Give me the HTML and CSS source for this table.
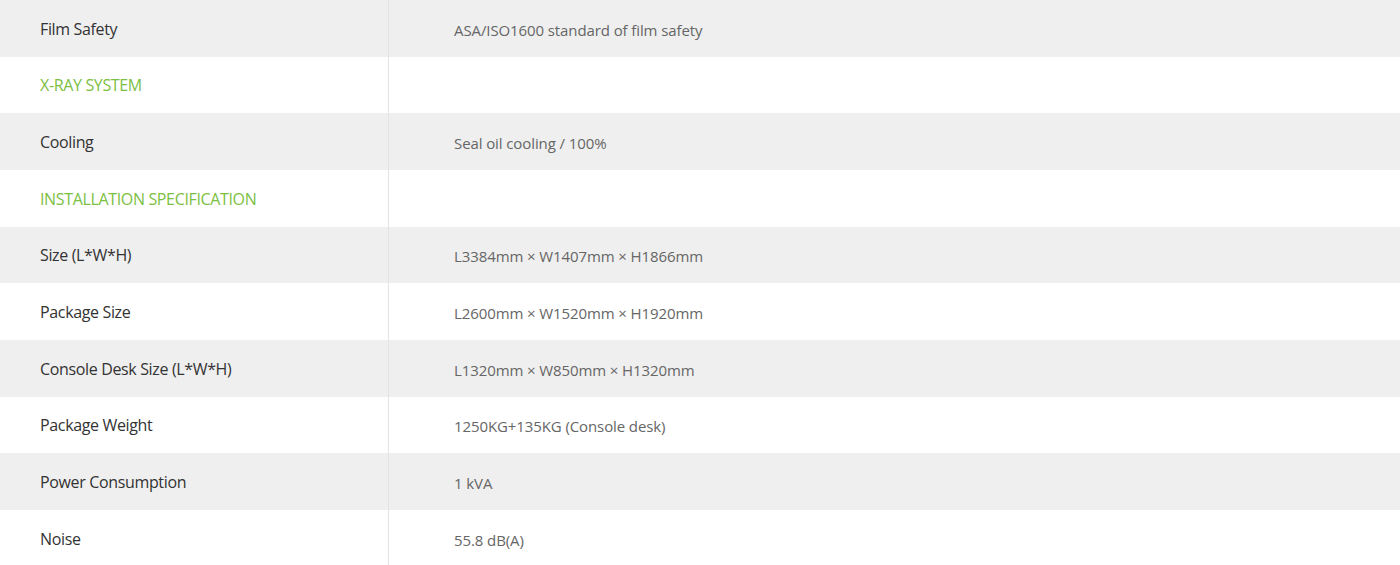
FILE: index.html
```html
<!DOCTYPE html>
<html>
<head>
<meta charset="utf-8">
<link rel="stylesheet" href="styles.css">
</head>
<body>
<div class="spec">
  <div class="row gray"><div class="label">Film Safety</div><div class="value">ASA/ISO1600 standard of film safety</div></div>
  <div class="row"><div class="label section">X-RAY SYSTEM</div><div class="value"></div></div>
  <div class="row gray"><div class="label">Cooling</div><div class="value">Seal oil cooling / 100%</div></div>
  <div class="row"><div class="label section">INSTALLATION SPECIFICATION</div><div class="value"></div></div>
  <div class="row gray"><div class="label">Size (L*W*H)</div><div class="value">L3384mm × W1407mm × H1866mm</div></div>
  <div class="row"><div class="label">Package Size</div><div class="value">L2600mm × W1520mm × H1920mm</div></div>
  <div class="row gray"><div class="label">Console Desk Size (L*W*H)</div><div class="value">L1320mm × W850mm × H1320mm</div></div>
  <div class="row"><div class="label">Package Weight</div><div class="value">1250KG+135KG (Console desk)</div></div>
  <div class="row gray"><div class="label">Power Consumption</div><div class="value">1 kVA</div></div>
  <div class="row"><div class="label">Noise</div><div class="value">55.8 dB(A)</div></div>
</div>
</body>
</html>
```
FILE: styles.css
```css
html, body {
  margin: 0;
  padding: 0;
  background: #ffffff;
}
body {
  font-family: "Open Sans", "Noto Sans", sans-serif;
}
.spec {
  display: flex;
  flex-direction: column;
  width: 1400px;
}
.row {
  display: grid;
  grid-template-columns: 389px 1fr;
  height: 56.67px;
  background: #ffffff;
}
.row.gray {
  background: #efefef;
}
.label {
  display: flex;
  align-items: center;
  padding-left: 40px;
  padding-top: 1px;
  font-size: 16px;
  color: #333333;
  border-right: 1px solid #e4e4e4;
  letter-spacing: -0.35px;
}
.label.section {
  color: #7cc043;
}
.value {
  display: flex;
  align-items: center;
  padding-left: 65px;
  padding-top: 3px;
  font-size: 15px;
  color: #666666;
  letter-spacing: -0.1px;
}
```
